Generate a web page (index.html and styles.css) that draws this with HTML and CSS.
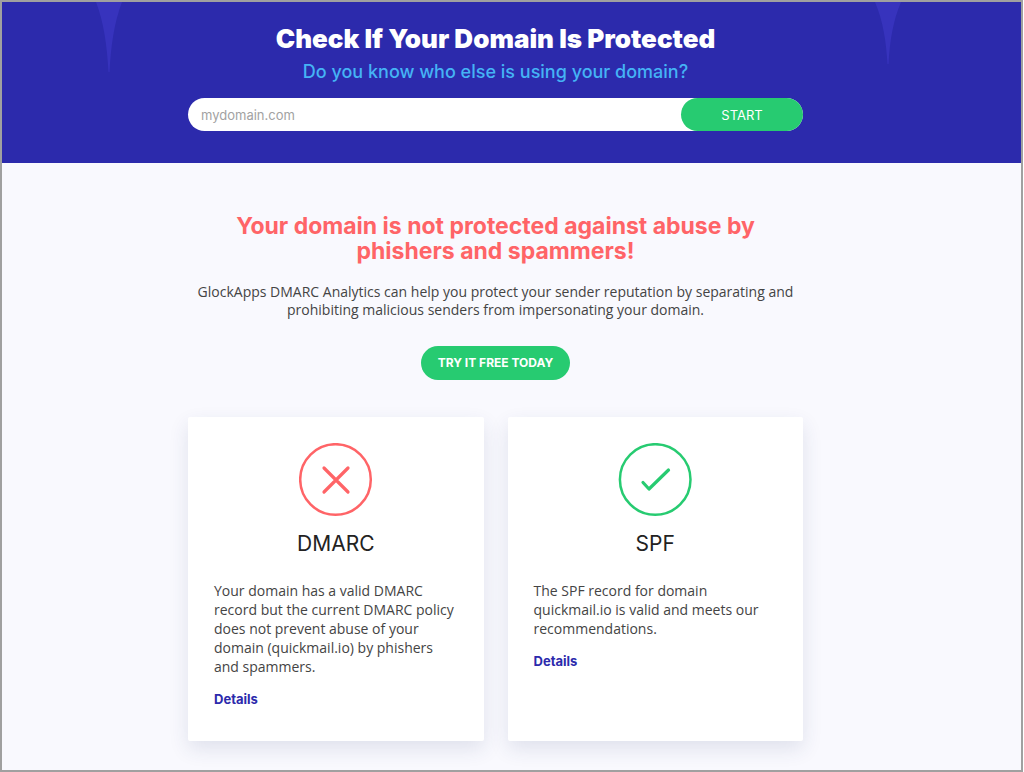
FILE: index.html
```html
<!DOCTYPE html>
<html lang="en">
<head>
<meta charset="utf-8">
<meta name="viewport" content="width=device-width, initial-scale=1">
<title>Check If Your Domain Is Protected</title>
<link rel="stylesheet" href="styles.css">
</head>
<body>
<div class="page">
  <header class="hero">
    <svg class="spike spike-left" viewBox="0 0 26 70" aria-hidden="true"><path d="M0 0H26C18 21 15 44 13.500 70H12.500C11 44 8 21 0 0Z"/></svg>
    <svg class="spike spike-right" viewBox="0 0 26 62" aria-hidden="true"><path d="M0 0H26C18 19 15 38 13.500 62H12.500C11 38 8 19 0 0Z"/></svg>
    <div class="container">
      <h1 class="hero-title">Check If Your Domain Is Protected</h1>
      <p class="hero-subtitle">Do you know who else is using your domain?</p>
      <form class="search">
        <input class="search-input" type="text" placeholder="mydomain.com" aria-label="Domain">
        <button class="search-button" type="button">START</button>
      </form>
    </div>
  </header>
  <main class="results">
    <div class="container">
      <h2 class="verdict">Your domain is not protected against abuse by phishers and spammers!</h2>
      <p class="summary">GlockApps DMARC Analytics can help you protect your sender reputation by separating and prohibiting malicious senders from impersonating your domain.</p>
      <a class="cta" href="#">TRY IT FREE TODAY</a>
      <div class="cards">
        <section class="card">
          <svg class="card-icon fail" viewBox="0 0 74 74" aria-hidden="true"><circle cx="36.500" cy="36.500" r="35.300" stroke-width="2.500"/><path d="M25 25L49 49M49 25L25 49" stroke-width="3.200"/></svg>
          <h3 class="card-title">DMARC</h3>
          <p class="card-text">Your domain has a valid DMARC record but the current DMARC policy does not prevent abuse of your domain (quickmail.io) by phishers and spammers.</p>
          <a class="card-link" href="#">Details</a>
        </section>
        <section class="card">
          <svg class="card-icon pass" viewBox="0 0 74 74" aria-hidden="true"><circle cx="37.200" cy="36.500" r="35.300" stroke-width="2.500"/><path d="M25 39.500L31 46L50.500 27" stroke-width="3.200"/></svg>
          <h3 class="card-title">SPF</h3>
          <p class="card-text">The SPF record for domain quickmail.io is valid and meets our recommendations.</p>
          <a class="card-link" href="#">Details</a>
        </section>
      </div>
    </div>
  </main>
</div>
</body>
</html>
```
FILE: styles.css
```css
* { box-sizing: border-box; }

body {
  margin: 0;
  padding-right: 1px;
  font-family: "Open Sans", "Noto Sans", sans-serif;
  font-size: 14px;
  color: #444;
  background: #fff;
}

h1, h2, h3, p { margin: 0; }

.page {
  min-height: 100vh;
  border: 2px solid #a0a0a0;
  background: #f9f9fe;
}

.container {
  width: 100%;
  max-width: 615px;
  margin: 0 auto;
  text-align: center;
}

.hero-title,
.hero-subtitle,
.verdict,
.cta,
.card-title,
.card-link,
.search-input,
.search-button {
  font-family: Inter, "Liberation Sans", sans-serif;
}

.hero {
  position: relative;
  padding: 20px 32px 32px 0;
  background: #2c2aac;
}

.hero-title {
  font-size: 26px;
  line-height: 33px;
  font-weight: 900;
  color: #fff;
}

.hero-subtitle {
  margin-top: 4px;
  font-size: 18px;
  line-height: 26px;
  font-weight: 500;
  color: #45b3f5;
}

.search {
  display: flex;
  margin-top: 13px;
  height: 33px;
  border-radius: 17px;
  background: #fff;
}

.search-input {
  flex: 1;
  min-width: 0;
  padding: 0 13px;
  border: 0;
  outline: 0;
  background: transparent;
  font-size: 13px;
}

.search-input::placeholder { color: #a2a2a2; }

.search-button {
  width: 122px;
  border: 0;
  border-radius: 17px;
  background: #27cb71;
  color: #fff;
  font-size: 13px;
}

.spike {
  position: absolute;
  top: 0;
  width: 26px;
  fill: #3733bd;
}

.spike-left { left: 94px; }
.spike-right { right: 120px; }

.results { padding: 51px 32px 28px 0; }

.verdict {
  padding: 0 32px;
  font-size: 23px;
  line-height: 25px;
  font-weight: 700;
  color: #ff6467;
}

.summary {
  margin-top: 19px;
  line-height: 18px;
}

.cta {
  display: inline-block;
  margin-top: 27px;
  padding: 0 17px;
  border-radius: 17px;
  background: #27cb71;
  color: #fff;
  font-size: 12px;
  line-height: 34px;
  font-weight: 700;
  text-decoration: none;
}

.cards {
  display: grid;
  grid-template-columns: 1fr 1fr;
  gap: 24px;
  margin-top: 37px;
}

.card {
  padding: 26px 26px 32px;
  border-radius: 2px;
  background: #fff;
  box-shadow: 0 8px 20px rgba(40, 60, 110, 0.12);
  text-align: left;
}

.card-icon {
  display: block;
  width: 74px;
  height: 74px;
  margin: 0 auto;
  fill: none;
  stroke-linecap: round;
  stroke-linejoin: round;
}

.fail { stroke: #ff6467; }
.pass { stroke: #27cb71; }

.card-title {
  margin-top: 13px;
  font-size: 21px;
  line-height: 28px;
  font-weight: 400;
  color: #222;
  text-align: center;
}

.card-text {
  margin-top: 23px;
  line-height: 19px;
}

.card-link {
  display: inline-block;
  margin-top: 14px;
  font-size: 13px;
  font-weight: 700;
  line-height: 19px;
  color: #2c2aac;
  text-decoration: none;
}
```
